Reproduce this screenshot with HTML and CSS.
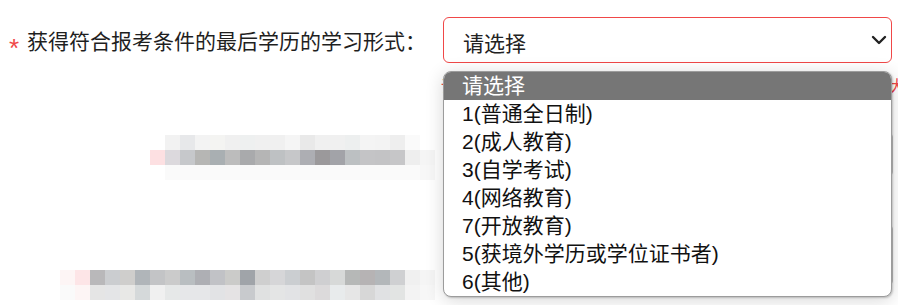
FILE: index.html
```html
<!DOCTYPE html>
<html lang="zh-CN">
<head>
<meta charset="utf-8">
<title>学历信息</title>
<link rel="stylesheet" href="styles.css">
</head>
<body>
<div class="page">
  <div class="row row-main">
    <div class="label"><span class="req">*</span><span class="label-text">获得符合报考条件的最后学历的学习形式：</span></div>
    <div class="field">
      <div class="select">
        <span class="select-value">请选择</span>
        <svg class="chevron" width="16" height="10" viewBox="0 0 16 10"><path d="M2 2 L8 8 L14 2" fill="none" stroke="#222" stroke-width="2.4" stroke-linecap="round" stroke-linejoin="round"/></svg>
      </div>
      <div class="error">请选择获得符合报考条件的最后学历的学习形式，若有多个以最大学历为准</div>
    </div>
  </div>

  <div class="row row-blur1">
    <div class="label-blur"><div class="mosaic mosaic-1"></div></div>
    <div class="field"><div class="input"></div></div>
  </div>

  <div class="row row-blur2">
    <div class="label-blur"><div class="mosaic mosaic-2"></div></div>
    <div class="field"><div class="input input-tall"></div></div>
  </div>

  <ul class="dropdown">
    <li class="opt opt-active">请选择</li>
    <li class="opt">1(普通全日制)</li>
    <li class="opt">2(成人教育)</li>
    <li class="opt">3(自学考试)</li>
    <li class="opt">4(网络教育)</li>
    <li class="opt">7(开放教育)</li>
    <li class="opt">5(获境外学历或学位证书者)</li>
    <li class="opt">6(其他)</li>
  </ul>
</div>
</body>
</html>
```

FILE: styles.css
```css
html, body {
  margin: 0;
  padding: 0;
  background: #fff;
  overflow: hidden;
}
body {
  width: 898px;
  height: 305px;
  font-family: "Liberation Sans", "Noto Sans CJK SC", sans-serif;
  color: #1f1f1f;
}
.page {
  position: relative;
  width: 898px;
  height: 305px;
}
.row {
  display: grid;
  grid-template-columns: 443px 450px;
}
.row-main {
  padding-top: 17px;
}
.label {
  display: flex;
  align-items: center;
  height: 46px;
  padding-left: 9px;
  font-size: 21px;
  white-space: nowrap;
}
.req {
  color: #f04848;
  font-size: 26px;
  width: 18px;
  padding-top: 16px;
  line-height: 1;
}
.label-text {
  font-family: "Noto Sans CJK SC", sans-serif;
  line-height: 46px;
}
.select {
  box-sizing: border-box;
  height: 46px;
  width: 449px;
  border: 1px solid #f04848;
  border-radius: 6px;
  display: flex;
  align-items: center;
  justify-content: space-between;
  padding: 0 4px 0 19px;
}
.select-value {
  font-family: "Noto Sans CJK SC", sans-serif;
  font-size: 21px;
  line-height: 44px;
  padding-top: 4px;
  color: #222;
}
.error {
  margin-top: 14px;
  font-family: "Noto Sans CJK SC", sans-serif;
  font-size: 16px;
  line-height: 16px;
  color: #f04848;
  white-space: nowrap;
  margin-left: -2px;
}
.row-blur1 {
  margin-top: 40px;
}
.label-blur {
  padding-top: 2px;
}
.mosaic {
  background-repeat: no-repeat;
}
.mosaic-1 {
  margin-left: 150px;
  width: 285px;
  height: 45px;
  background-size: 100% 15px;
  background-position: 0 0, 0 15px, 0 30px;
  background-image:
    linear-gradient(to right, #fff 0 15px, #f2f2f2 15px 30px, #e7e8ea 30px 45px, #f3f3f3 45px 60px, #f4f4f2 60px 75px, #f0f0f0 75px 90px, #eef0f0 90px 105px, #f0f0f0 105px 135px, #f5f5f5 135px 150px, #e9e9e9 150px 165px, #f0f0f0 165px 195px, #edefef 195px 210px, #f4f4f4 210px 225px, #f3f3f3 225px 240px, #eeeeee 240px 255px, #fafafa 255px 270px, #fff 270px),
    linear-gradient(to right, #fde0e2 0 15px, #dcd9dd 15px 30px, #c6c8cb 30px 45px, #b6b6b4 45px 60px, #a9afb2 60px 75px, #bcbcbc 75px 90px, #a9aaac 90px 105px, #b5b5b5 105px 120px, #bec1c3 120px 135px, #c6c7c9 135px 150px, #adaeb3 150px 165px, #9b999b 165px 180px, #a2a3a8 180px 195px, #bcc0c2 195px 210px, #c4c4c6 210px 225px, #c3c3c5 225px 240px, #c6c6c8 240px 255px, #eeeeee 255px 270px, #f5f5f5 270px),
    linear-gradient(to right, #fff 0 15px, #fafafa 15px 270px, #f7f7f7 270px);
}
.row-blur2 {
  margin-top: 45px;
}
.row-blur2 .label-blur {
  padding-top: 45px;
}
.mosaic-2 {
  margin-left: 60px;
  width: 375px;
  height: 30px;
  background-size: 100% 15px;
  background-position: 0 0, 0 15px;
  background-image:
    linear-gradient(to right, #fdf5f5 0 15px, #fde5e7 15px 30px, #b9b8ba 30px 45px, #cbcdd0 45px 60px, #cfcecc 60px 75px, #b0b5b9 75px 90px, #c3c4c6 90px 105px, #cbcbcb 105px 120px, #b9bec1 120px 135px, #aeafb4 135px 150px, #c1c2c6 150px 165px, #cbcbc9 165px 180px, #a0a4a9 180px 195px, #cfcfcf 195px 210px, #d6d6d8 210px 225px, #cbced1 225px 240px, #c4c4c4 240px 255px, #cfcfd1 255px 270px, #d7d9d8 270px 285px, #b6b8b7 285px 300px, #b6b3b4 300px 315px, #b3b7ba 315px 330px, #cfd0d2 330px 345px, #f0f0f0 345px 360px, #f5f5f5 360px),
    linear-gradient(to right, #fafafa 0 15px, #fdf5f5 15px 30px, #e5e5e5 30px 45px, #e4e5e7 45px 60px, #e8e8e6 60px 75px, #d5d9da 75px 90px, #f0f0f0 90px 105px, #e6e8e8 105px 120px, #e6e7e9 120px 150px, #e2e3e5 150px 165px, #e5e3e4 165px 180px, #c8cacd 180px 195px, #e0e1e1 195px 210px, #e4e5e5 210px 225px, #e2e3e5 225px 240px, #e0e0e0 240px 255px, #dcdadb 255px 270px, #e8ebec 270px 285px, #e6e6e6 285px 300px, #d7d7d7 300px 315px, #e0e1e3 315px 330px, #e2e4e3 330px 345px, #f3f3f3 345px 360px, #f7f7f7 360px);
}
.input {
  box-sizing: border-box;
  width: 450px;
  height: 43px;
  border: 1px solid #c8c8c8;
  border-radius: 4px;
}
.input-tall {
  height: 60px;
}
.dropdown {
  position: absolute;
  left: 443px;
  top: 71px;
  width: 449px;
  box-sizing: border-box;
  margin: 0;
  padding: 0;
  list-style: none;
  background: #fff;
  border: 1px solid #9c9c9c;
  border-radius: 8px;
  overflow: hidden;
  box-shadow: 0 3px 18px rgba(0, 0, 0, 0.16), 1px 1px 2px rgba(0, 0, 0, 0.2);
}
.opt {
  height: 28px;
  line-height: 28px;
  padding-left: 18px;
  font-size: 21px;
  color: #111;
  white-space: nowrap;
}
.opt-active {
  background: #767676;
  color: #fff;
}
```
